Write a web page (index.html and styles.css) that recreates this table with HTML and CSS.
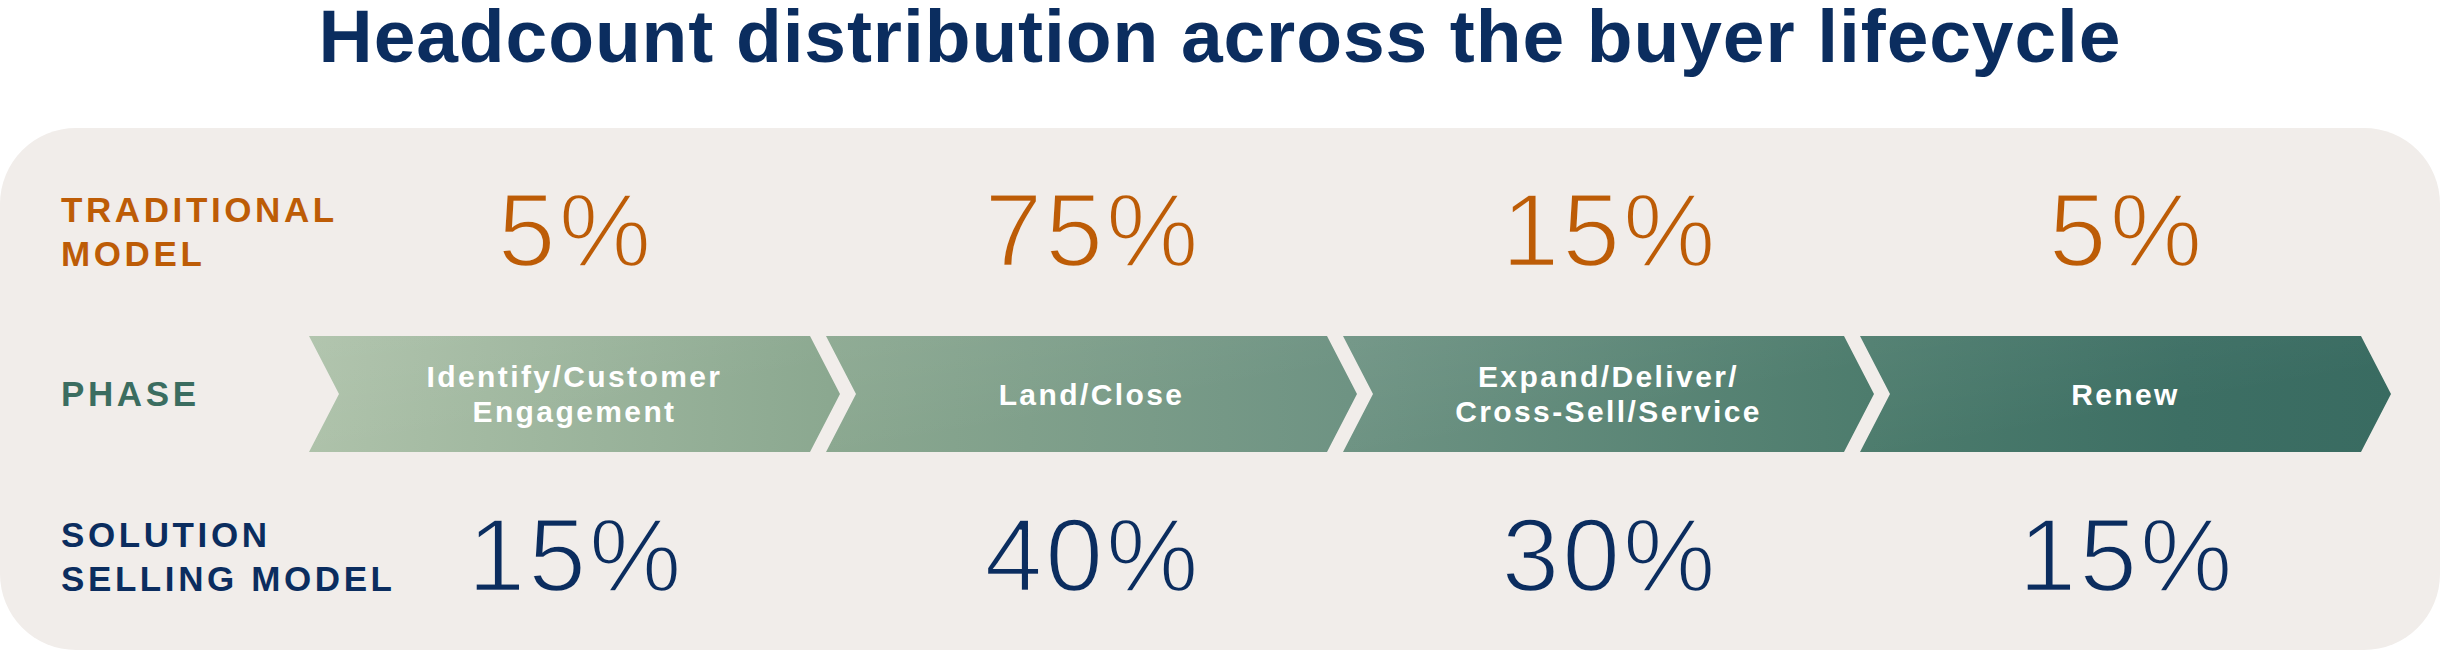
FILE: index.html
```html
<!DOCTYPE html>
<html lang="en">
<head>
<meta charset="utf-8">
<title>Headcount distribution across the buyer lifecycle</title>
<link rel="stylesheet" href="styles.css">
</head>
<body>
<h1 class="title">Headcount distribution across the buyer lifecycle</h1>
<section class="panel">
  <div class="row row-traditional">
    <div class="label label-orange">TRADITIONAL<br>MODEL</div>
    <div class="cell value value-orange">5%</div>
    <div class="cell value value-orange">75%</div>
    <div class="cell value value-orange">15%</div>
    <div class="cell value value-orange">5%</div>
  </div>
  <div class="row row-phase">
    <div class="label label-teal">PHASE</div>
    <div class="cell chevron chevron-1"><span>Identify/Customer<br>Engagement</span></div>
    <div class="cell chevron chevron-2"><span>Land/Close</span></div>
    <div class="cell chevron chevron-3"><span>Expand/Deliver/<br>Cross-Sell/Service</span></div>
    <div class="cell chevron chevron-4"><span>Renew</span></div>
  </div>
  <div class="row row-solution">
    <div class="label label-navy">SOLUTION<br>SELLING MODEL</div>
    <div class="cell value value-navy">15%</div>
    <div class="cell value value-navy">40%</div>
    <div class="cell value value-navy">30%</div>
    <div class="cell value value-navy">15%</div>
  </div>
</section>
</body>
</html>
```

FILE: styles.css
```css
html, body {
  margin: 0;
  padding: 0;
  background: #ffffff;
}

body {
  width: 2440px;
  height: 650px;
  overflow: hidden;
  font-family: "Liberation Sans", Arial, sans-serif;
}

.title {
  margin: 0;
  padding-top: 2px;
  height: 68px;
  font-family: "Liberation Sans", Arial, sans-serif;
  font-weight: 700;
  font-size: 75px;
  line-height: 68px;
  letter-spacing: 0.9px;
  color: #0b2d5f;
  text-align: center;
  white-space: nowrap;
}

.panel {
  box-sizing: border-box;
  margin-top: 58px;
  height: 522px;
  border-radius: 76px;
  background: #f1edea;
  padding: 60px 0 0 61px;
}

.row {
  display: flex;
}

.row-traditional {
  align-items: flex-start;
  height: 88px;
}

.row-phase {
  align-items: center;
  height: 116px;
  margin-top: 60px;
}

.row-solution {
  align-items: flex-start;
  height: 88px;
  margin-top: 61px;
}

.label {
  flex: 0 0 248px;
  min-width: 0;
  white-space: nowrap;
  font-family: "Liberation Sans", Arial, sans-serif;
  font-weight: 700;
  font-size: 35px;
  line-height: 44px;
  letter-spacing: 3.6px;
}

.label-orange { color: #bd5c06; }
.label-teal { color: #3b6d60; }
.label-navy { color: #0b2d5f; }

.cell {
  flex: 0 0 531px;
  min-width: 0;
  margin-right: -14px;
  text-align: center;
}

.value {
  box-sizing: border-box;
  padding-left: 3px;
  font-family: "Liberation Sans", Arial, sans-serif;
  font-weight: 400;
  font-size: 104px;
  line-height: 85px;
  letter-spacing: 3px;
  white-space: nowrap;
  -webkit-text-stroke: 2.5px #f1edea;
}

.value-orange { color: #bd5c06; }
.value-navy { color: #0b2d5f; }

.chevron {
  height: 116px;
  display: flex;
  align-items: center;
  justify-content: center;
  color: #ffffff;
  font-family: "Liberation Sans", Arial, sans-serif;
  font-weight: 700;
  font-size: 30px;
  line-height: 35px;
  letter-spacing: 2.4px;
  clip-path: polygon(0 0, calc(100% - 30px) 0, 100% 50%, calc(100% - 30px) 100%, 0 100%, 30px 50%);
  background-image:
    linear-gradient(170deg, rgba(255, 255, 255, 0.05) 0%, rgba(255, 255, 255, 0) 60%),
    linear-gradient(90deg, #aec2aa 0%, #8ba890 25%, #6e9383 50%, #4d7c6d 75%, #3d6f64 90%, #396b61 100%);
  background-size: 100% 100%, 2082px 100%;
  background-repeat: no-repeat;
}

.chevron span {
  display: block;
  white-space: nowrap;
}

.chevron-1 { background-position: 0 0, 0 0; }
.chevron-2 { background-position: 0 0, -517px 0; }
.chevron-3 { background-position: 0 0, -1034px 0; }
.chevron-4 { background-position: 0 0, -1551px 0; }
```
